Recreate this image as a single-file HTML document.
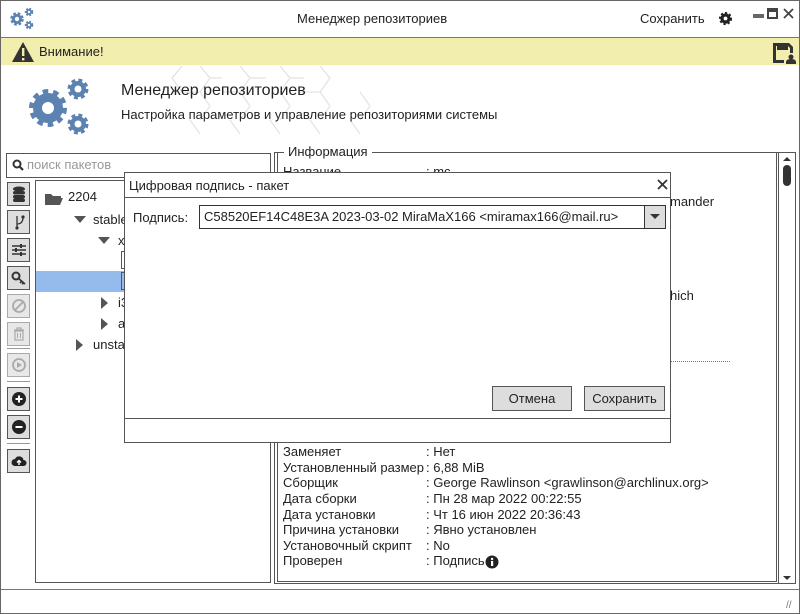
<!DOCTYPE html>
<html><head><meta charset="utf-8"><style>
*{box-sizing:border-box;margin:0;padding:0}
body{width:800px;height:614px;overflow:hidden;background:#fff;font-family:"Liberation Sans","DejaVu Sans",sans-serif;font-size:13px;color:#222;position:relative}
.a{position:absolute}
.frame{left:0;top:0;width:800px;height:614px;border:1px solid #666}
.btn{position:absolute;left:7px;width:23px;height:24px;border:1px solid #555;background:#ddd;display:flex;align-items:center;justify-content:center}
.btn.dis{border-color:#aaa;background:#e8e8e8}
.row{position:absolute;left:283px;font-size:13px}
.val{position:absolute;left:426px;font-size:13px}
</style></head><body>
<div class="a frame"></div>
<!-- title bar -->
<svg class="a" style="left:8px;top:6px" width="28" height="24" viewBox="0 0 28 24">
<g fill="#5b82b0" stroke="#5b82b0"><circle cx="9" cy="13" r="5" stroke-width="3.5" stroke-dasharray="2.4 1.6"/><circle cx="21" cy="6" r="3" stroke-width="2.5" stroke-dasharray="1.6 1.2"/><circle cx="21" cy="19" r="3" stroke-width="2.5" stroke-dasharray="1.6 1.2"/></g>
<g fill="#fff"><circle cx="9" cy="13" r="2.2"/><circle cx="21" cy="6" r="1.2"/><circle cx="21" cy="19" r="1.2"/></g>
</svg>
<div class="a" style="left:297px;top:11px;font-size:13px">Менеджер репозиториев</div>
<div class="a" style="left:640px;top:11px;font-size:13px">Сохранить</div>
<svg class="a" style="left:718px;top:11px" width="15" height="15" viewBox="0 0 16 16"><circle cx="8" cy="8" r="5.5" fill="#222" stroke="#222" stroke-width="3" stroke-dasharray="2.2 2"/><circle cx="8" cy="8" r="2" fill="#fff"/></svg>
<div class="a" style="left:753px;top:14px;width:11px;height:4px;background:#666"></div>
<div class="a" style="left:767px;top:8px;width:11px;height:11px;border:2px solid #444;border-top-width:4px"></div>
<svg class="a" style="left:783px;top:8px" width="11" height="11"><path d="M1 1L10 10M10 1L1 10" stroke="#444" stroke-width="1.8"/></svg>
<div class="a" style="left:1px;top:37px;width:798px;height:1px;background:#777"></div>
<!-- yellow bar -->
<div class="a" style="left:1px;top:38px;width:798px;height:27px;background:#f2eeae"></div>
<svg class="a" style="left:11px;top:41px" width="24" height="22" viewBox="0 0 24 22"><path d="M12 1 L23 21 L1 21 Z" fill="#333"/><rect x="11" y="7" width="2.4" height="8" fill="#f2eeae"/><rect x="11" y="17" width="2.4" height="2.4" fill="#f2eeae"/></svg>
<div class="a" style="left:39px;top:44px;font-size:13px">Внимание!</div>
<svg class="a" style="left:772px;top:42px" width="24" height="22" viewBox="0 0 24 22"><path d="M1 1h16l4 4v6h-3V6l-2-2v4H5V4H4v14h8v3H1Z" fill="#333"/><circle cx="19" cy="15" r="2.5" fill="#333"/><path d="M14 22v-2q0-3 5-3t5 3v2Z" fill="#333"/></svg>
<!-- header -->
<svg class="a" style="left:130px;top:66px;opacity:.5" width="270" height="78"><g fill="none" stroke="#bbb" stroke-width="1"><path d="M70 0l10 12-10 14h-18l-10-14 10-12M110 0l10 12-10 14h-18M150 0l10 12-10 14M190 0l10 12-10 14h-20M80 12h12M120 12h16M160 12h14M70 26l10 14-10 14M110 26l10 14-10 14M150 26l10 14-10 14M190 26l10 14-10 14M230 26l10 14-10 14M60 54l10 14M100 54l10 14M140 54l10 14M180 54l10 14M220 54l10 14"/></g></svg>
<svg class="a" style="left:25px;top:74px" width="68" height="66" viewBox="0 0 68 66">
<g fill="#5b82b0"><circle cx="23" cy="34" r="15" stroke="#5b82b0" stroke-width="8" stroke-dasharray="5 4.4"/><circle cx="53" cy="15" r="8" stroke="#5b82b0" stroke-width="5" stroke-dasharray="3.5 2.8"/><circle cx="53" cy="50" r="8" stroke="#5b82b0" stroke-width="5" stroke-dasharray="3.5 2.8"/></g>
<g fill="#fff"><circle cx="23" cy="34" r="6"/><circle cx="53" cy="15" r="3.5"/><circle cx="53" cy="50" r="3.5"/></g>
</svg>
<div class="a" style="left:121px;top:82px;font-size:16px">Менеджер репозиториев</div>
<div class="a" style="left:121px;top:107px;font-size:13px">Настройка параметров и управление репозиториями системы</div>
<!-- search -->
<div class="a" style="left:6px;top:153px;width:265px;height:25px;border:1px solid #555"></div>
<svg class="a" style="left:12px;top:159px" width="12" height="12" viewBox="0 0 12 12"><circle cx="5" cy="5" r="3.5" fill="none" stroke="#333" stroke-width="2"/><path d="M7.5 7.5L11 11" stroke="#333" stroke-width="2.2"/></svg>
<div class="a" style="left:27px;top:157px;color:#999;font-size:13px">поиск пакетов</div>
<!-- left buttons -->
<div class="btn" style="top:182px"><svg width="14" height="16"><g fill="#333"><ellipse cx="7" cy="3" rx="6" ry="2.5"/><rect x="1" y="5" width="12" height="3.5" rx="2"/><rect x="1" y="9" width="12" height="3.5" rx="2"/><rect x="1" y="12.5" width="12" height="3.5" rx="2"/></g></svg></div>
<div class="btn" style="top:210px"><svg width="12" height="16"><path d="M4 2v12M4 10q6 0 6-7" stroke="#333" fill="none" stroke-width="1.3"/><circle cx="4" cy="14" r="1.6" fill="#333"/><circle cx="10" cy="3" r="1.6" fill="#333"/></svg></div>
<div class="btn" style="top:238px"><svg width="16" height="14"><g stroke="#333" stroke-width="1.4"><path d="M1 3h14M1 7h14M1 11h14"/></g><g fill="#333"><rect x="9" y="1" width="2" height="4"/><rect x="4" y="5" width="2" height="4"/><rect x="9" y="9" width="2" height="4"/></g></svg></div>
<div class="btn" style="top:266px"><svg width="16" height="14"><circle cx="5" cy="5" r="3.5" fill="none" stroke="#333" stroke-width="2"/><path d="M7 7l7 6M11 10l-2 2M13 12l-2 1" stroke="#333" stroke-width="1.6"/></svg></div>
<div class="btn dis" style="top:294px"><svg width="16" height="16"><circle cx="8" cy="8" r="6" fill="none" stroke="#aaa" stroke-width="1.8"/><path d="M4 12L12 4" stroke="#aaa" stroke-width="1.8"/></svg></div>
<div class="btn dis" style="top:322px"><svg width="12" height="14"><path d="M1 3h10M4 3V1h4v2M2 4h8v9H2z" fill="none" stroke="#aaa" stroke-width="1.2"/><path d="M4.5 6v5M7.5 6v5" stroke="#aaa"/></svg></div>
<div class="a" style="left:7px;top:348px;width:23px;height:1px;background:#999"></div>
<div class="btn dis" style="top:353px"><svg width="16" height="16"><circle cx="8" cy="8" r="6" fill="none" stroke="#aaa" stroke-width="1.8"/><path d="M6 5v6l5-3z" fill="#aaa"/></svg></div>
<div class="a" style="left:7px;top:381px;width:23px;height:1px;background:#999"></div>
<div class="btn" style="top:387px"><svg width="16" height="16"><circle cx="8" cy="8" r="7" fill="#222"/><path d="M4.5 8h7M8 4.5v7" stroke="#fff" stroke-width="2"/></svg></div>
<div class="btn" style="top:415px"><svg width="16" height="16"><circle cx="8" cy="8" r="7" fill="#222"/><path d="M4.5 8h7" stroke="#fff" stroke-width="2"/></svg></div>
<div class="a" style="left:7px;top:443px;width:23px;height:1px;background:#999"></div>
<div class="btn" style="top:449px"><svg width="16" height="14"><path d="M4 12a3.5 3.5 0 0 1 0-7 4.5 4.5 0 0 1 8.5 1 3 3 0 0 1 0 6z" fill="#222"/><path d="M8 11V7M6 8.5l2-2 2 2" stroke="#fff" stroke-width="1.4" fill="none"/></svg></div>
<!-- tree -->
<div class="a" style="left:35px;top:180px;width:236px;height:403px;border:1px solid #555"></div>
<div class="a" style="left:36px;top:271px;width:234px;height:21px;background:#94bbeb"></div>
<svg class="a" style="left:44px;top:192px" width="20" height="14"><path d="M1 13V2h6l2 2h8v2H5L1 13h15l3-7H5" fill="#555"/></svg>
<div class="a" style="left:68px;top:189px">2204</div>
<div class="a" style="left:74px;top:216px;width:0;height:0;border-left:6px solid transparent;border-right:6px solid transparent;border-top:7px solid #555"></div>
<div class="a" style="left:93px;top:212px">stable</div>
<div class="a" style="left:98px;top:237px;width:0;height:0;border-left:6px solid transparent;border-right:6px solid transparent;border-top:7px solid #555"></div>
<div class="a" style="left:118px;top:233px">x</div>
<div class="a" style="left:121px;top:251px;width:5px;height:18px;border:1px solid #555;border-right:none"></div>
<div class="a" style="left:121px;top:272px;width:5px;height:18px;border:1px solid #555;border-right:none"></div>
<div class="a" style="left:101px;top:297px;width:0;height:0;border-top:6px solid transparent;border-bottom:6px solid transparent;border-left:7px solid #555"></div>
<div class="a" style="left:118px;top:295px">i3</div>
<div class="a" style="left:101px;top:318px;width:0;height:0;border-top:6px solid transparent;border-bottom:6px solid transparent;border-left:7px solid #555"></div>
<div class="a" style="left:118px;top:316px">a</div>
<div class="a" style="left:76px;top:339px;width:0;height:0;border-top:6px solid transparent;border-bottom:6px solid transparent;border-left:7px solid #555"></div>
<div class="a" style="left:93px;top:337px">unsta</div>
<!-- info panel -->
<div class="a" style="left:274px;top:152px;width:505px;height:432px;border:1px solid #555"></div>
<div class="a" style="left:779px;top:152px;width:17px;height:432px;border:1px solid #555;border-left:none"></div>
<div class="a" style="left:783px;top:157px;width:0;height:0;border-left:4px solid transparent;border-right:4px solid transparent;border-bottom:4px solid #333"></div>
<div class="a" style="left:783px;top:165px;width:8px;height:21px;border-radius:4px;background:#333"></div>
<div class="a" style="left:783px;top:576px;width:0;height:0;border-left:4px solid transparent;border-right:4px solid transparent;border-top:4px solid #333"></div>
<div class="a" style="left:277px;top:152px;width:500px;height:430px;border:1px solid #555;border-top:none"></div>
<div class="a" style="left:277px;top:152px;width:500px;height:1px;background:#555;top:152px"></div>
<div class="a" style="left:284px;top:144px;background:#fff;padding:0 4px">Информация</div>
<div class="row" style="top:164px;height:8px;overflow:hidden">Название</div><div class="val" style="top:164px;height:8px;overflow:hidden">: mc</div>
<div class="a" style="left:670px;top:194px">mander</div>
<div class="a" style="left:670px;top:288px">hich</div>
<div class="a" style="left:670px;top:361px;width:60px;border-top:1px dotted #777"></div>
<div class="row" style="top:444px">Заменяет</div><div class="val" style="top:444px">: Нет</div>
<div class="row" style="top:460px">Установленный размер</div><div class="val" style="top:460px">: 6,88 MiB</div>
<div class="row" style="top:475px">Сборщик</div><div class="val" style="top:475px">: George Rawlinson &lt;grawlinson@archlinux.org&gt;</div>
<div class="row" style="top:491px">Дата сборки</div><div class="val" style="top:491px">: Пн 28 мар 2022 00:22:55</div>
<div class="row" style="top:507px">Дата установки</div><div class="val" style="top:507px">: Чт 16 июн 2022 20:36:43</div>
<div class="row" style="top:522px">Причина установки</div><div class="val" style="top:522px">: Явно установлен</div>
<div class="row" style="top:538px">Установочный скрипт</div><div class="val" style="top:538px">: No</div>
<div class="row" style="top:553px">Проверен</div><div class="val" style="top:553px">: Подпись</div>
<svg class="a" style="left:485px;top:555px" width="14" height="14"><circle cx="7" cy="7" r="6.5" fill="#222"/><rect x="6" y="6" width="2.2" height="5" fill="#fff"/><circle cx="7.1" cy="4" r="1.2" fill="#fff"/></svg>
<!-- status bar -->
<div class="a" style="left:1px;top:589px;width:798px;height:1px;background:#777"></div>
<div class="a" style="left:786px;top:600px;color:#777;font-size:10px">//</div>
<!-- dialog -->
<div class="a" style="left:124px;top:172px;width:547px;height:271px;background:#fff;border:1px solid #555"></div>
<div class="a" style="left:125px;top:197px;width:545px;height:1px;background:#555"></div>
<div class="a" style="left:129px;top:178px">Цифровая подпись - пакет</div>
<svg class="a" style="left:657px;top:179px" width="11" height="11"><path d="M1 1L10 10M10 1L1 10" stroke="#333" stroke-width="1.8"/></svg>
<div class="a" style="left:133px;top:210px">Подпись:</div>
<div class="a" style="left:199px;top:205px;width:467px;height:24px;border:1px solid #333"></div>
<div class="a" style="left:644px;top:206px;width:21px;height:22px;border-left:1px solid #333;background:#ddd"></div>
<div class="a" style="left:650px;top:214px;width:0;height:0;border-left:5px solid transparent;border-right:5px solid transparent;border-top:5px solid #333"></div>
<div class="a" style="left:204px;top:209px">C58520EF14C48E3A 2023-03-02 MiraMaX166 &lt;miramax166@mail.ru&gt;</div>
<div class="a" style="left:492px;top:386px;width:80px;height:25px;border:1px solid #555;background:#ddd;text-align:center;line-height:23px">Отмена</div>
<div class="a" style="left:584px;top:386px;width:81px;height:25px;border:1px solid #555;background:#ddd;text-align:center;line-height:23px">Сохранить</div>
<div class="a" style="left:125px;top:418px;width:545px;height:1px;background:#555"></div>
</body></html>
